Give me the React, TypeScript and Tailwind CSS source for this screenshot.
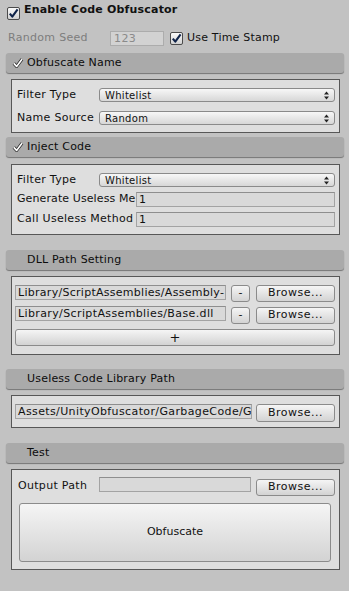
import { ReactNode } from "react";

const font = "font-['DejaVu_Sans',sans-serif]"

function Toggle() {
    return <span className="w-[13px] h-[13px] shrink-0 rounded-[2px] border border-[#4b4b4b] bg-linear-to-b from-[#fafafa] to-[#d2d2d2] flex items-center justify-center">
        <svg width="11" height="11" viewBox="0 0 11 11">
            <path d="M1.8 5.6 L4.3 8.6 L9.6 1.4" stroke="#10244a" strokeWidth="2.1" fill="none" strokeLinejoin="round" />
        </svg>
    </span>
}

function HeaderCheck() {
    return <svg width="12" height="12" viewBox="0 0 12 12" className="absolute left-[6px] top-[4px]">
        <path d="M1.8 6.4 L4.6 9.4 L10 2.2" stroke="#2e2e2e" strokeWidth="3.2" fill="none" strokeLinejoin="round" />
        <path d="M1.8 6.4 L4.6 9.4 L10 2.2" stroke="#ffffff" strokeWidth="1.6" fill="none" strokeLinejoin="round" />
    </svg>
}

function Header({ title, check, className }: { title: string, check?: boolean, className: string }) {
    return <div className={`relative ml-[6px] w-[338px] h-[20px] rounded-[3px] bg-[#aaaaaa] shadow-[0_1px_1px_rgba(0,0,0,0.4)] flex items-center pl-[21px] text-[11px] tracking-[0.2px] text-[#0c0c0c] ${className}`}>
        {check && <HeaderCheck />}
        {title}
    </div>
}

function Box({ children, className }: { children: ReactNode, className: string }) {
    return <div className={`ml-[11px] w-[329px] border border-[#575757] bg-[#dedede] ${className}`}>
        {children}
    </div>
}

function Popup({ value }: { value: string }) {
    return <div className="flex-1 h-[14px] rounded-[3px] border border-[#8a8a8a] bg-linear-to-b from-[#f7f7f7] to-[#d7d7d7] flex items-center justify-between pl-[5px] pr-[5px] text-[10px] text-[#111] tracking-[0.3px]">
        <span>{value}</span>
        <svg width="5" height="9" viewBox="0 0 5 9">
            <path d="M0 3.5 L2.5 0.5 L5 3.5 Z" fill="#222" />
            <path d="M0 5.5 L2.5 8.5 L5 5.5 Z" fill="#222" />
        </svg>
    </div>
}

function Field({ value, className, tight }: { value?: string, className: string, tight?: boolean }) {
    return <div className={`h-[15px] border border-[#a3a3a3] border-t-[#8e8e8e] bg-[#d9d9d9] pl-[2px] text-[11px] leading-[13px] ${tight ? "tracking-[0.28px]" : "tracking-[0.38px]"} text-[#111] whitespace-nowrap overflow-hidden ${className}`}>
        {value}
    </div>
}

function Btn({ children, className }: { children: ReactNode, className: string }) {
    return <div className={`rounded-[3px] border border-[#8b8b8b] bg-linear-to-b from-[#f5f5f5] to-[#d3d3d3] flex items-center justify-center text-[11px] text-[#111] ${className}`}>
        {children}
    </div>
}

export default function App() {
    return <div className={`${font} w-[349px] h-[591px] bg-[#c2c2c2] flex flex-col overflow-hidden`}>
        <div className="flex items-start h-[21px]">
            <span className="ml-[7px] mt-[7px]"><Toggle /></span>
            <span className="ml-[4px] mt-[3px] text-[11px] leading-[13px] font-bold tracking-[0.2px] text-[#111]">Enable Code Obfuscator</span>
        </div>

        <div className="mt-[9px] h-[16px] flex items-center">
            <span className="ml-[8px] w-[102px] text-[11px] text-[#7d7d7d] tracking-[0.3px]">Random Seed</span>
            <div className="w-[54px] h-[15px] border border-[#acacac] bg-[#d2d2d2] pl-[3px] text-[11px] leading-[13px] tracking-[0.4px] text-[#8a8a8a]">123</div>
            <span className="ml-[6px]"><Toggle /></span>
            <span className="ml-[4px] text-[11px] text-[#111] tracking-[0.2px]">Use Time Stamp</span>
        </div>

        <Header title="Obfuscate Name" check className="mt-[7px]" />
        <Box className="mt-[6px] pt-[8px] pb-[7px] pl-[5px] pr-[4px] flex flex-col gap-[9px]">
            <div className="flex items-center h-[14px]">
                <span className="w-[82px] text-[11px] text-[#111] tracking-[0.3px]">Filter Type</span>
                <Popup value="Whitelist" />
            </div>
            <div className="flex items-center h-[14px]">
                <span className="w-[82px] text-[11px] text-[#111] tracking-[0.3px] whitespace-nowrap">Name Source</span>
                <Popup value="Random" />
            </div>
        </Box>

        <Header title="Inject Code" check className="mt-[4px]" />
        <Box className="mt-[7px] pt-[8px] pb-[7px] pl-[5px] pr-[4px] flex flex-col">
            <div className="flex items-center h-[14px]">
                <span className="w-[82px] text-[11px] text-[#111] tracking-[0.3px]">Filter Type</span>
                <Popup value="Whitelist" />
            </div>
            <div className="flex items-center h-[15px] mt-[5px]">
                <span className="w-[119px] text-[11px] text-[#111] tracking-[0.1px] whitespace-nowrap">Generate Useless Me</span>
                <Field value="1" className="flex-1" />
            </div>
            <div className="flex items-center h-[15px] mt-[5px]">
                <span className="w-[119px] text-[11px] text-[#111] tracking-[0.3px] whitespace-nowrap">Call Useless Method</span>
                <Field value="1" className="flex-1" />
            </div>
        </Box>

        <Header title="DLL Path Setting" className="mt-[15px]" />
        <Box className="mt-[6px] pt-[8px] pb-[8px] pl-[3px] pr-[4px] flex flex-col">
            <div className="flex items-start h-[18px]">
                <Field value="Library/ScriptAssemblies/Assembly-" className="w-[211px]" tight />
                <Btn className="ml-[5px] w-[19px] h-[17px]">-</Btn>
                <Btn className="ml-[6px] w-[79px] h-[17px] tracking-[0.5px]">Browse...</Btn>
            </div>
            <div className="flex items-start h-[18px] mt-[3px]">
                <Field value="Library/ScriptAssemblies/Base.dll" className="w-[211px]" />
                <Btn className="ml-[5px] w-[19px] h-[17px] mt-[1px]">-</Btn>
                <Btn className="ml-[6px] w-[79px] h-[17px] mt-[1px] tracking-[0.5px]">Browse...</Btn>
            </div>
            <Btn className="mt-[5px] h-[17px] text-[13px] text-[#111]">+</Btn>
        </Box>

        <Header title="Useless Code Library Path" className="mt-[14px]" />
        <Box className="mt-[6px] pt-[8px] pb-[5px] pl-[3px] pr-[4px]">
            <div className="flex items-start h-[18px]">
                <Field value="Assets/UnityObfuscator/GarbageCode/G" className="w-[237px]" />
                <Btn className="ml-[4px] w-[79px] h-[18px] tracking-[0.5px]">Browse...</Btn>
            </div>
        </Box>

        <Header title="Test" className="mt-[15px]" />
        <Box className="mt-[6px] pt-[7px] pb-[7px] pr-[4px] flex flex-col">
            <div className="flex items-start h-[19px]">
                <span className="ml-[6px] w-[81px] mt-[1px] text-[11px] text-[#111] tracking-[0.3px]">Output Path</span>
                <Field className="w-[152px]" />
                <Btn className="ml-[5px] w-[79px] h-[17px] mt-[2px] tracking-[0.5px]">Browse...</Btn>
            </div>
            <Btn className="ml-[7px] mr-[4px] mt-[7px] h-[59px]">Obfuscate</Btn>
        </Box>
    </div>
}
